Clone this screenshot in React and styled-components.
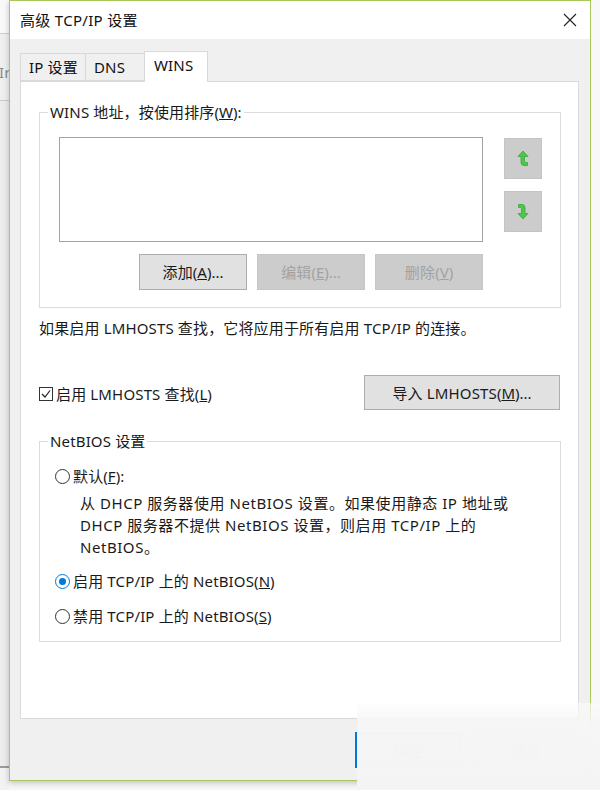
import React from "react";
import styled, { createGlobalStyle } from "styled-components";

const Global = createGlobalStyle`
  html, body {
    margin: 0;
    padding: 0;
    background: #f7f7f7;
  }
  body {
    font-family: "Noto Sans", "Noto Sans CJK SC", sans-serif;
    font-size: 15px;
    letter-spacing: 0.15px;
    color: #1a1a1a;
  }
`;

const Root = styled.div`
  position: relative;
  width: 600px;
  height: 790px;
  overflow: hidden;
  display: flex;
`;

const BackWindow = styled.div`
  width: 9px;
  flex: none;
  overflow: hidden;
  background: linear-gradient(
    180deg,
    #f9f9f9 0px,
    #f9f9f9 33px,
    #cfcfcf 33px,
    #cfcfcf 34px,
    #efefef 34px,
    #efefef 100px,
    #c9c9c9 100px,
    #c9c9c9 101px,
    #ececec 101px,
    #ececec 766px,
    #9a9a9a 766px,
    #9a9a9a 768px,
    #f2f2f2 768px
  );
`;

const BackText = styled.div`
  margin-top: 62px;
  margin-left: -1px;
  font-size: 15px;
  line-height: 20px;
  color: #8a8a8a;
  white-space: nowrap;
`;

const Dialog = styled.div`
  width: 582px;
  height: 781px;
  flex: none;
  box-sizing: border-box;
  border: 1px solid #a9c85c;
  background: #f0f0f0;
  display: flex;
  flex-direction: column;
  box-shadow: 0 2px 6px rgba(0, 0, 0, 0.22);
`;

const RightSide = styled.div`
  flex: 1;
  background: #f8f8f8;
`;

const TitleBar = styled.div`
  height: 38px;
  flex: none;
  background: #ffffff;
  display: flex;
  align-items: center;
  justify-content: space-between;
  padding: 0 13px 0 10px;
`;

const Title = styled.div`
  font-size: 15px;
  line-height: 20px;
  letter-spacing: 0.3px;
  color: #111;
  margin-top: -1px;
`;

const CloseIcon = styled.svg`
  width: 14px;
  height: 14px;
  display: block;
`;

const Body = styled.div`
  padding: 12px 11px 0 10px;
  display: flex;
  flex-direction: column;
`;

const TabRow = styled.div`
  height: 30px;
  display: flex;
  align-items: flex-end;
  position: relative;
  z-index: 1;
`;

const Tab = styled.div`
  box-sizing: border-box;
  width: ${(p) => p.$w}px;
  height: ${(p) => (p.$active ? 31 : 28)}px;
  margin-bottom: ${(p) => (p.$active ? -1 : 0)}px;
  padding: ${(p) => (p.$active ? "3px 0 0 9px" : "3px 0 0 8px")};
  background: ${(p) => (p.$active ? "#ffffff" : "#f0f0f0")};
  border: 1px solid #d9d9d9;
  border-bottom: ${(p) => (p.$active ? "none" : "1px solid #d9d9d9")};
  margin-left: ${(p) => (p.$first ? 0 : -1)}px;
  font-size: 15px;
  line-height: 20px;
  color: #111;
  white-space: nowrap;
`;

const Panel = styled.div`
  box-sizing: border-box;
  height: 638px;
  background: #ffffff;
  border: 1px solid #d9d9d9;
  padding: 20px 17px 0 18px;
  display: flex;
  flex-direction: column;
`;

const Group = styled.fieldset`
  margin: ${(p) => p.$top || 0}px 0 0 0;
  padding: 0 0 ${(p) => p.$bottom}px 0;
  border: 1px solid #dcdcdc;
  min-width: 0;
`;

const Legend = styled.legend`
  margin-left: 8px;
  padding: 0 2px;
  font-size: 15px;
  line-height: 20px;
  color: #1a1a1a;
`;

const Key = styled.span`
  font-family: "Noto Sans", sans-serif;
  letter-spacing: 0;
`;

const WinsGrid = styled.div`
  display: grid;
  grid-template-columns: 424px 38px;
  column-gap: 21px;
  row-gap: 12px;
  padding-left: 19px;
  margin-top: 15px;
`;

const ListBox = styled.div`
  box-sizing: border-box;
  height: 105px;
  border: 1px solid #a3a3a3;
  background: #ffffff;
`;

const ArrowCol = styled.div`
  display: flex;
  flex-direction: column;
  gap: 12px;
  padding-top: 1px;
`;

const ArrowButton = styled.div`
  box-sizing: border-box;
  width: 38px;
  height: 41px;
  background: #cccccc;
  border: 1px solid #c4c4c4;
  display: flex;
  align-items: center;
  justify-content: center;
`;

const ButtonRow = styled.div`
  display: flex;
  justify-content: flex-end;
  gap: 10px;
`;

const Button = styled.div`
  box-sizing: border-box;
  width: ${(p) => p.$w}px;
  height: ${(p) => p.$h || 36}px;
  display: flex;
  align-items: center;
  justify-content: center;
  background: ${(p) => (p.$disabled ? "#cccccc" : "#e1e1e1")};
  border: ${(p) =>
    p.$focus
      ? "2px solid #0078d7"
      : p.$disabled
      ? "1px solid #c6c6c6"
      : "1px solid #adadad"};
  color: ${(p) => (p.$disabled ? "#a2a2a2" : "#1a1a1a")};
  font-size: 15px;
  line-height: 20px;
  white-space: nowrap;
`;

const Info = styled.div`
  margin-top: 10px;
  font-size: 15px;
  line-height: 20px;
  color: #1a1a1a;
`;

const CheckRow = styled.div`
  margin-top: 37px;
  display: flex;
  align-items: center;
  justify-content: space-between;
  padding-right: 1px;
`;

const CheckLabel = styled.div`
  display: flex;
  align-items: center;
  gap: 3px;
  font-size: 15px;
  line-height: 20px;
  margin-top: 2px;
`;

const CheckBox = styled.span`
  box-sizing: border-box;
  width: 14px;
  height: 14px;
  border: 1px solid #333333;
  background: #ffffff;
  display: flex;
  align-items: center;
  justify-content: center;
`;

const RadioRow = styled.div`
  display: flex;
  align-items: center;
  gap: 3px;
  padding-left: 15px;
  margin-top: ${(p) => p.$top}px;
  font-size: 15px;
  line-height: 20px;
`;

const Radio = styled.span`
  box-sizing: border-box;
  width: 15px;
  height: 15px;
  border-radius: 50%;
  border: 1px solid ${(p) => (p.$checked ? "#0078d7" : "#333333")};
  background: #ffffff;
  display: flex;
  align-items: center;
  justify-content: center;

  &::after {
    content: "";
    display: ${(p) => (p.$checked ? "block" : "none")};
    width: 7px;
    height: 7px;
    border-radius: 50%;
    background: #0078d7;
  }
`;

const Description = styled.div`
  padding-left: 40px;
  margin-top: 6px;
  font-size: 15px;
  line-height: 22px;
  letter-spacing: 0.55px;
  color: #1a1a1a;
`;

const Footer = styled.div`
  flex: 1;
  display: flex;
  justify-content: flex-end;
  align-items: flex-start;
  gap: 10px;
  padding: 13px 11px 0 0;
`;

const Blur = styled.div`
  position: absolute;
  left: 357px;
  top: 703px;
  right: 0;
  bottom: 0;
  background: linear-gradient(
    180deg,
    rgba(252, 252, 252, 0.6) 0px,
    rgba(246, 246, 246, 0.98) 22px,
    #f4f4f4 100%
  );
`;

function Arrow({ down }) {
  return (
    <svg
      width="12"
      height="17"
      viewBox="0 0 12 17"
      style={{ transform: down ? "rotate(180deg)" : "none" }}
    >
      <path
        d="M6 1 L1 6.5 H4 V12.5 Q4 15.5 7 15.5 H10.5 V12.5 H8.5 Q7.5 12.5 7.5 11.5 V6.5 H11 Z"
        fill="#4cc74c"
        stroke="#38a838"
        strokeWidth="0.8"
        strokeLinejoin="round"
      />
    </svg>
  );
}

export default function App() {
  return (
    <Root>
      <Global />
      <BackWindow>
        <BackText>Ir</BackText>
      </BackWindow>
      <Dialog>
        <TitleBar>
          <Title>高级 TCP/IP 设置</Title>
          <CloseIcon viewBox="0 0 14 14">
            <path d="M1 1 L13 13 M13 1 L1 13" stroke="#222" strokeWidth="1.1" />
          </CloseIcon>
        </TitleBar>
        <Body>
          <TabRow>
            <Tab $w={66} $first>
              IP 设置
            </Tab>
            <Tab $w={60}>DNS</Tab>
            <Tab $w={64} $active>
              WINS
            </Tab>
          </TabRow>
          <Panel>
            <Group $bottom={17}>
              <Legend>
                WINS 地址，按使用排序<Key>(<u>W</u>):</Key>
              </Legend>
              <WinsGrid>
                <ListBox />
                <ArrowCol>
                  <ArrowButton>
                    <Arrow />
                  </ArrowButton>
                  <ArrowButton>
                    <Arrow down />
                  </ArrowButton>
                </ArrowCol>
                <ButtonRow>
                  <Button $w={108}>
                    添加<Key>(<u>A</u>)...</Key>
                  </Button>
                  <Button $w={108} $disabled>
                    编辑<Key>(<u>E</u>)...</Key>
                  </Button>
                  <Button $w={108} $disabled>
                    删除<Key>(<u>V</u>)</Key>
                  </Button>
                </ButtonRow>
              </WinsGrid>
            </Group>
            <Info>如果启用 LMHOSTS 查找，它将应用于所有启用 TCP/IP 的连接。</Info>
            <CheckRow>
              <CheckLabel>
                <CheckBox>
                  <svg width="10" height="10" viewBox="0 0 10 10">
                    <path
                      d="M1 5 L4 8 L9 1.5"
                      fill="none"
                      stroke="#222"
                      strokeWidth="1.2"
                    />
                  </svg>
                </CheckBox>
                <span>
                  启用 LMHOSTS 查找<Key>(<u>L</u>)</Key>
                </span>
              </CheckLabel>
              <Button $w={196} $h={35}>
                导入 LMHOSTS<Key>(<u>M</u>)...</Key>
              </Button>
            </CheckRow>
            <Group $top={21} $bottom={15}>
              <Legend>NetBIOS 设置</Legend>
              <RadioRow $top={15}>
                <Radio />
                <span>
                  默认<Key>(<u>F</u>):</Key>
                </span>
              </RadioRow>
              <Description>
                从 DHCP 服务器使用 NetBIOS 设置。如果使用静态 IP 地址或
                <br />
                DHCP 服务器不提供 NetBIOS 设置，则启用 TCP/IP 上的
                <br />
                NetBIOS。
              </Description>
              <RadioRow $top={13}>
                <Radio $checked />
                <span>
                  启用 TCP/IP 上的 NetBIOS<Key>(<u>N</u>)</Key>
                </span>
              </RadioRow>
              <RadioRow $top={15}>
                <Radio />
                <span>
                  禁用 TCP/IP 上的 NetBIOS<Key>(<u>S</u>)</Key>
                </span>
              </RadioRow>
            </Group>
          </Panel>
        </Body>
        <Footer>
          <Button $w={107} $focus>
            确定
          </Button>
          <Button $w={107}>取消</Button>
        </Footer>
      </Dialog>
      <RightSide />
      <Blur />
    </Root>
  );
}
